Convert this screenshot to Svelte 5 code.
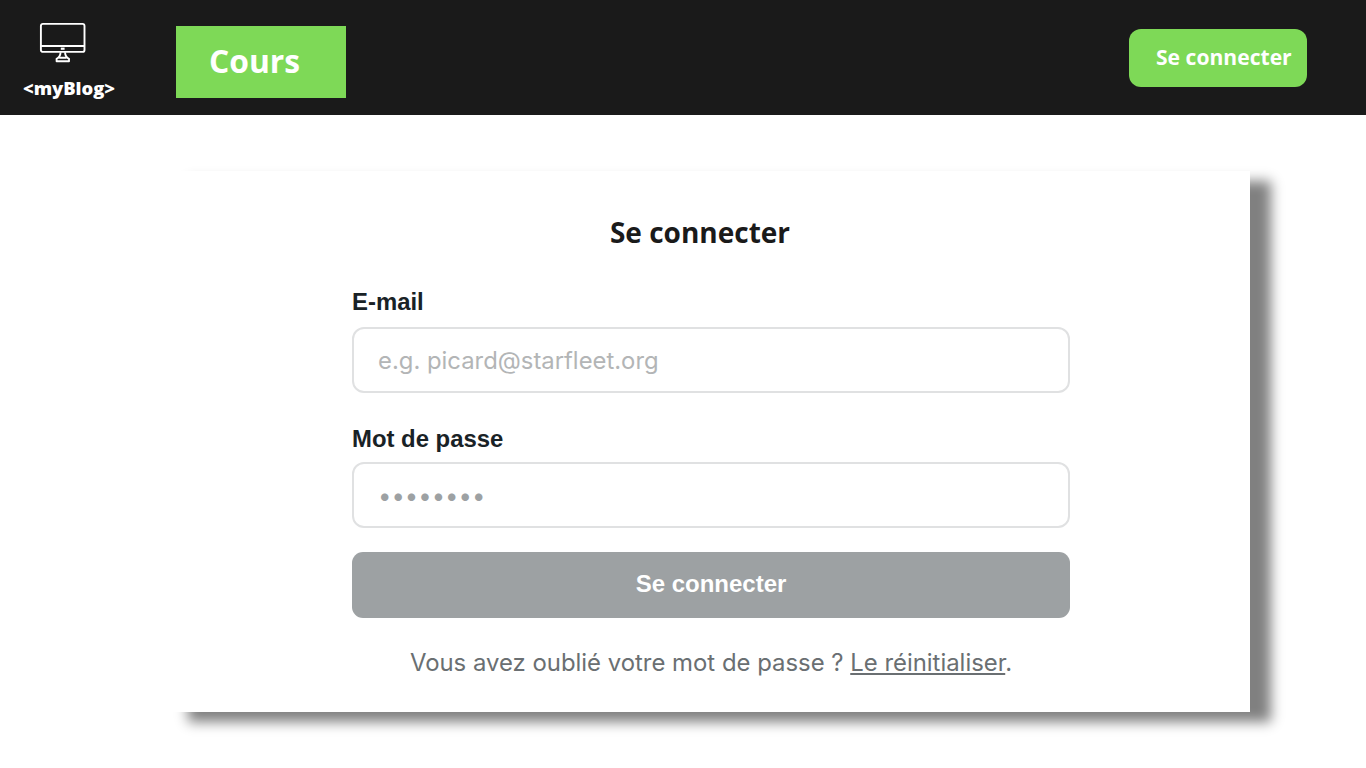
<script>
  let email = $state('');
  let password = $state('');
</script>

<header>
  <div class="brand">
    <svg width="48" height="42" viewBox="0 0 48 42" fill="none" stroke="#fff" stroke-width="1.9" stroke-linejoin="round">
      <rect x="1.9" y="1.9" width="43.6" height="28" rx="2" />
      <path d="M2 24H45.5" />
      <path d="M21.8 26.7H25.6" stroke-width="2.2" />
      <path d="M21.6 30.2C21.4 33.4 20.4 35.4 17.6 36.8V39.2H30V36.8C27.2 35.4 26.2 33.4 26 30.2M20.2 35.8H27.4" />
    </svg>
    <span>&lt;myBlog&gt;</span>
  </div>
  <a class="cours" href="#cours">Cours</a>
  <a class="login" href="#login">Se connecter</a>
</header>

<main>
  <section class="card">
    <h1>Se connecter</h1>
    <form onsubmit={(e) => e.preventDefault()}>
      <label for="email">E-mail</label>
      <input id="email" type="email" placeholder="e.g. picard@starfleet.org" bind:value={email} />
      <label class="second" for="password">Mot de passe</label>
      <input id="password" class="password" type="password" placeholder="••••••••" bind:value={password} />
      <button type="submit">Se connecter</button>
      <p>Vous avez oublié votre mot de passe ? <a href="#reset">Le réinitialiser</a>.</p>
    </form>
  </section>
</main>

<style>
  :global(body) {
    background: #fff;
  }
  header {
    display: flex;
    align-items: flex-start;
    height: 115px;
    box-sizing: border-box;
    background: #1a1a1a;
    color: #fff;
    font-family: 'Open Sans', sans-serif;
    font-weight: 700;
  }
  header a {
    color: #fff;
    text-decoration: none;
    box-sizing: border-box;
  }
  .brand {
    width: 138px;
    margin-right: 38px;
    padding-top: 22px;
    display: flex;
    flex-direction: column;
    align-items: center;
  }
  .brand svg {
    display: block;
    margin-left: -12px;
  }
  .brand span {
    margin-top: 11px;
    font-size: 18.4px;
    font-weight: 800;
    line-height: 26px;
    letter-spacing: -0.05px;
  }
  .cours {
    width: 170px;
    height: 71.5px;
    margin-top: 26px;
    padding-left: 33px;
    background: #7ed957;
    font-size: 31.8px;
    line-height: 70px;
  }
  .login {
    width: 178.5px;
    height: 58.5px;
    margin: 28.5px 59px 0 auto;
    padding-left: 27.5px;
    border-radius: 12px;
    background: #7ed957;
    font-size: 21.1px;
    line-height: 56px;
    white-space: nowrap;
  }
  main {
    padding: 56px 116px 56px 167px;
  }
  .card {
    height: 541px;
    box-sizing: border-box;
    padding: 42px 180px 0 185px;
    background: #fff;
    box-shadow: 21px 10px 12px #808080;
  }
  h1 {
    margin: 0 0 44px;
    padding-right: 22px;
    color: #1a1a1a;
    font: 700 28px/38px 'Open Sans', sans-serif;
    text-align: center;
  }
  form {
    display: flex;
    flex-direction: column;
    color: #192226;
    font-family: 'Liberation Sans', sans-serif;
  }
  label {
    font-size: 23.9px;
    font-weight: 700;
    line-height: 28px;
    margin: -7px 0 11px;
  }
  .second {
    margin: 32px 0 9px;
  }
  input {
    height: 66px;
    box-sizing: border-box;
    padding: 0 24px;
    border: 2px solid #e0e1e2;
    border-radius: 12px;
    background: #fff;
    color: #192226;
    font: 400 23.85px Inter, sans-serif;
    outline: none;
  }
  input::placeholder {
    color: #b3b5b6;
    opacity: 1;
  }
  .password::placeholder {
    color: #9da1a3;
  }
  button {
    height: 66px;
    margin: 23.5px 0 0;
    padding: 0 0 2px;
    border: 0;
    border-radius: 11px;
    background: #9da1a3;
    color: #fff;
    font: 700 24px 'Liberation Sans', sans-serif;
  }
  p {
    margin: 30.5px 0 0;
    color: #6a6f72;
    font: 400 23.9px/30px Inter, sans-serif;
    text-align: center;
    white-space: nowrap;
  }
  p a {
    color: inherit;
    text-decoration-thickness: 1.5px;
    text-decoration-skip-ink: none;
    text-underline-offset: 2px;
  }
</style>
